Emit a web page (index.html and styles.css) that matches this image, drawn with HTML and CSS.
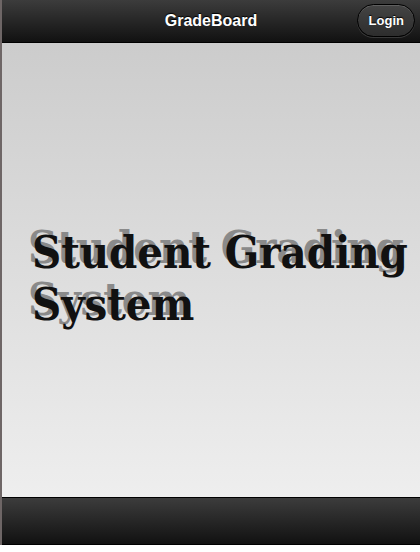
FILE: index.html
```html
<!DOCTYPE html>
<html>
<head>
<meta charset="utf-8">
<link rel="stylesheet" href="styles.css">
</head>
<body>
<div class="page">
  <header class="bar header">
    <h1 class="title">GradeBoard</h1>
    <a class="btn">Login</a>
  </header>
  <main class="content">
    <h2 class="hero">Student Grading System</h2>
  </main>
  <footer class="bar footer"></footer>
</div>
</body>
</html>
```
FILE: styles.css
```css
html, body { margin: 0; padding: 0; height: 100%; background: #fff; }
body { font-family: "Liberation Sans", Arial, sans-serif; }
.page {
  display: flex; flex-direction: column;
  height: 545px;
  border-left: 2px solid #6e6666;
  box-sizing: border-box;
}
.bar {
  background: linear-gradient(#3c3c3c, #111);
  border-top: 1px solid #000;
  border-bottom: 1px solid #000;
  color: #fff;
}
.header {
  height: 43px; box-sizing: border-box;
  display: flex; align-items: center; justify-content: center;
  position: relative;
  border-top: 0;
}
.title {
  margin: 0; font-size: 16px; font-weight: bold;
  text-shadow: 0 -1px 1px #000;
}
.btn {
  position: absolute; right: 5px; top: 4px;
  height: 33px; box-sizing: border-box; padding: 0 10px 0 11px;
  display: flex; align-items: center;
  border: 1px solid #000; border-radius: 17px;
  background: linear-gradient(#444, #2d2d2d);
  box-shadow: inset 0 1px 0 rgba(255,255,255,0.15), 0 1px 0 rgba(255,255,255,0.15);
  font-size: 13px; font-weight: bold; color: #fff;
  text-shadow: 0 -1px 1px #000;
}
.content {
  flex: 1;
  background: linear-gradient(#ccc, #eee);
  display: flex; align-items: center;
  padding: 18px 0 0 30px;
}
.hero {
  margin: 0;
  font-family: "DejaVu Serif Condensed", "DejaVu Serif", serif; font-weight: bold;
  font-stretch: condensed;
  font-size: 45px; line-height: 52px;
  letter-spacing: -0.1px;
  color: #111;
  text-shadow: -4px -5px 0 #8a8a8a;
}
.footer { height: 48px; box-sizing: border-box; }
```
